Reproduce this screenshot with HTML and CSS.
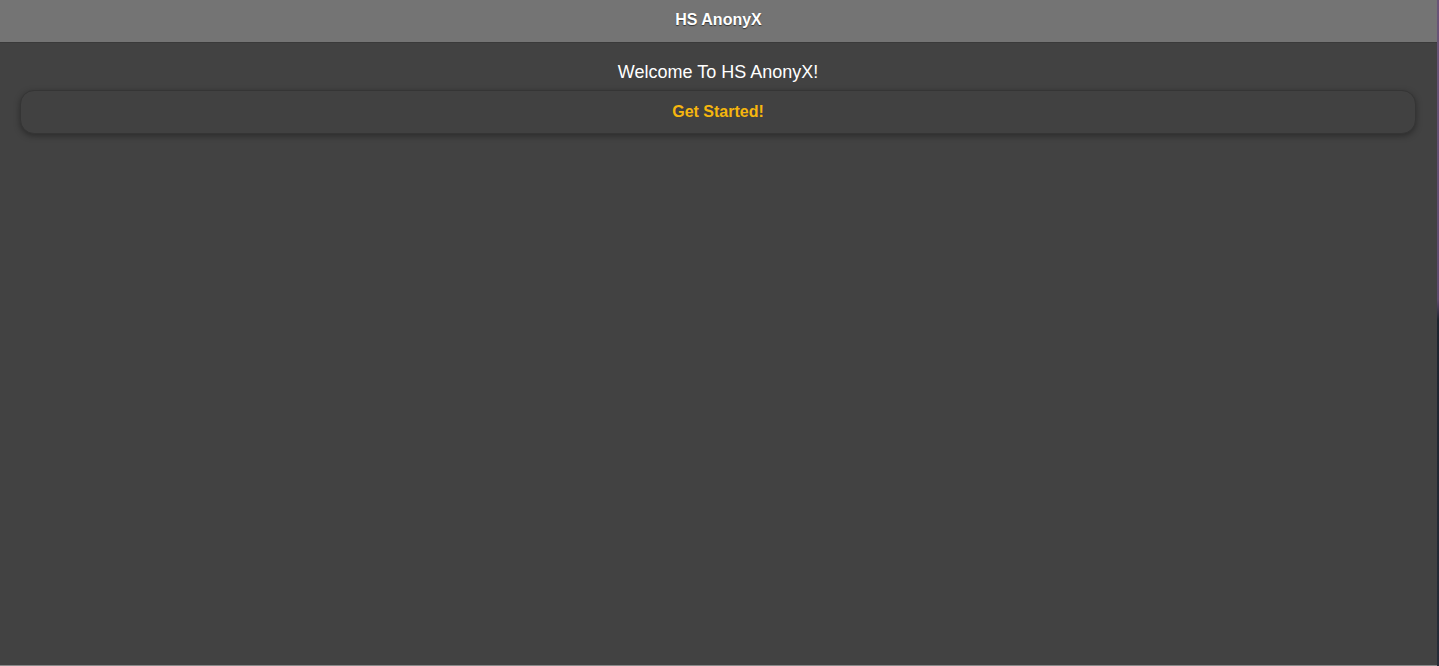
FILE: index.html
```html
<!DOCTYPE html>
<html>
<head>
<meta charset="utf-8">
<link rel="stylesheet" href="styles.css">
</head>
<body>
<div class="screen">
  <div class="app">
    <header class="bar"><h1 class="title">HS AnonyX</h1></header>
    <main class="content">
      <p class="welcome">Welcome To HS AnonyX!</p>
      <div class="card"><a class="start">Get Started!</a></div>
    </main>
  </div>
  <div class="edge"></div>
</div>
</body>
</html>
```
FILE: styles.css
```css
html, body { margin: 0; padding: 0; height: 100%; }
body { background: #424242; font-family: "Liberation Sans", Arial, sans-serif; overflow: hidden; }
.screen { display: flex; height: 666px; }
.app { flex: 1; display: flex; flex-direction: column; background: #424242; border-bottom: 1px solid #8a8a8a; box-sizing: border-box; }
.edge { width: 2px; background: linear-gradient(#6a5478 0, #5e4a6e 300px, #1e2430 320px, #262c38 666px); }
.bar { height: 42px; background: #747474; border-bottom: 1px solid #3a3a3a; display: flex; align-items: center; justify-content: center; }
.title { margin: 0; font-size: 16px; font-weight: bold; color: #fff; text-shadow: 0 1px 1px #333; line-height: 1; padding-bottom: 3px; }
.content { padding: 0 21px 0 20px; display: flex; flex-direction: column; }
.welcome { margin: 18px 0 0; text-align: center; color: #fff; font-size: 18px; line-height: 22px; }
.card { margin-top: 7px; height: 42px; border: 1px solid #353535; border-radius: 14px; box-shadow: 0 2px 6px rgba(0,0,0,0.35); display: flex; align-items: center; justify-content: center; background: #414141; }
.start { color: #f5b60e; font-weight: bold; font-size: 16px; }
```
